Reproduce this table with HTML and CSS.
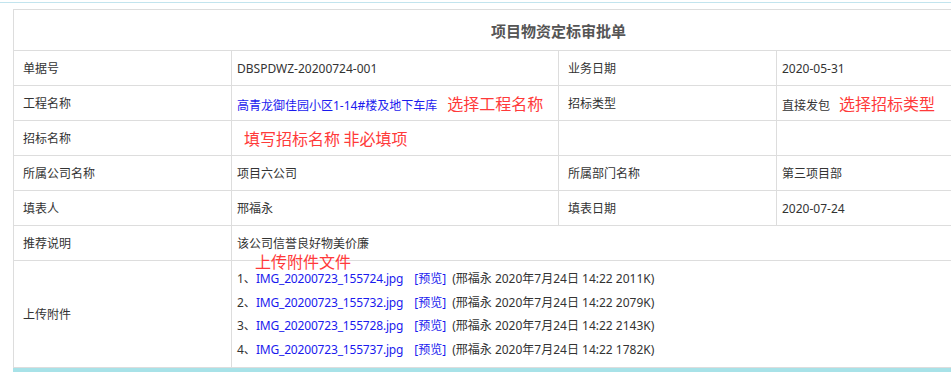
FILE: index.html
```html
<!DOCTYPE html>
<html lang="zh-CN">
<head>
<meta charset="utf-8">
<title>项目物资定标审批单</title>
<link rel="stylesheet" href="styles.css">
</head>
<body>
<div class="topline"></div>
<div class="page">
  <table class="form">
    <colgroup>
      <col class="c-label"><col class="c-value"><col class="c-label"><col class="c-value">
    </colgroup>
    <tr class="title-row">
      <td colspan="4" class="title">项目物资定标审批单</td>
    </tr>
    <tr>
      <td class="label">单据号</td>
      <td class="value">DBSPDWZ-20200724-001</td>
      <td class="label">业务日期</td>
      <td class="value">2020-05-31</td>
    </tr>
    <tr>
      <td class="label">工程名称</td>
      <td class="value"><span class="link">高青龙御佳园小区1-14#楼及地下车库</span><span class="note note-gap">选择工程名称</span></td>
      <td class="label">招标类型</td>
      <td class="value">直接发包<span class="note note-gap2">选择招标类型</span></td>
    </tr>
    <tr>
      <td class="label">招标名称</td>
      <td class="value"><span class="note note-indent">填写招标名称 非必填项</span></td>
      <td class="label"></td>
      <td class="value"></td>
    </tr>
    <tr>
      <td class="label">所属公司名称</td>
      <td class="value">项目六公司</td>
      <td class="label">所属部门名称</td>
      <td class="value">第三项目部</td>
    </tr>
    <tr>
      <td class="label">填表人</td>
      <td class="value">邢福永</td>
      <td class="label">填表日期</td>
      <td class="value">2020-07-24</td>
    </tr>
    <tr>
      <td class="label">推荐说明</td>
      <td colspan="3" class="value">该公司信誉良好物美价廉</td>
    </tr>
    <tr class="attach-row">
      <td class="label">上传附件</td>
      <td colspan="3" class="value attach">
        <div class="attach-box">
          <span class="note upload-note">上传附件文件</span>
          <ul class="files">
            <li>1、<span class="link file">IMG_20200723_155724.jpg</span><span class="link preview">[预览]</span><span class="meta">(邢福永 2020年7月24日 14:22 2011K)</span></li>
            <li>2、<span class="link file">IMG_20200723_155732.jpg</span><span class="link preview">[预览]</span><span class="meta">(邢福永 2020年7月24日 14:22 2079K)</span></li>
            <li>3、<span class="link file">IMG_20200723_155728.jpg</span><span class="link preview">[预览]</span><span class="meta">(邢福永 2020年7月24日 14:22 2143K)</span></li>
            <li>4、<span class="link file">IMG_20200723_155737.jpg</span><span class="link preview">[预览]</span><span class="meta">(邢福永 2020年7月24日 14:22 1782K)</span></li>
          </ul>
        </div>
      </td>
    </tr>
  </table>
  <div class="bottombar"></div>
</div>
</body>
</html>
```
FILE: styles.css
```css
html, body {
  margin: 0;
  padding: 0;
  background: #fff;
  overflow: hidden;
}
body {
  font-family: "Noto Sans", "Noto Sans CJK SC", sans-serif;
  font-size: 12px;
  color: #333;
}
.topline {
  height: 2px;
  border-bottom: 1px solid #c2e4ee;
}
.page {
  padding: 6px 0 0 13px;
  width: 1091px;
}
.form {
  border-collapse: collapse;
  width: 1091px;
  table-layout: fixed;
}
.c-label { width: 218px; }
.c-value { width: 327px; }
.form td {
  border: 1px solid #ddd;
  height: 34px;
  padding: 0;
  vertical-align: middle;
  white-space: nowrap;
}
.title-row td {
  height: 40px;
}
.title {
  text-align: center;
  font-weight: bold;
  font-size: 15px;
  color: #555;
  font-family: "Noto Sans CJK SC", sans-serif;
}
.label {
  padding-left: 9px !important;
}
.value {
  padding-left: 5px !important;
}
.link {
  color: #1a1aee;
}
.file {
  letter-spacing: -0.18px;
}
.note {
  color: #ff3a3a;
  font-size: 16px;
  font-family: "Noto Sans CJK SC", sans-serif;
}
.note-gap { margin-left: 10px; }
.note-gap2 { margin-left: 9px; }
.note-indent { margin-left: 7px; }
.attach-box {
  position: relative;
  padding: 6px 0;
}
.upload-note {
  position: absolute;
  left: 18px;
  top: -8px;
  line-height: 16px;
}
.files {
  list-style: none;
  margin: 0;
  padding: 0;
}
.files li {
  line-height: 23.5px;
  height: 23.5px;
}
.preview {
  margin-left: 11px;
}
.meta {
  margin-left: 6px;
}
.bottombar {
  height: 6px;
  background: #a8e2e8;
}
```
